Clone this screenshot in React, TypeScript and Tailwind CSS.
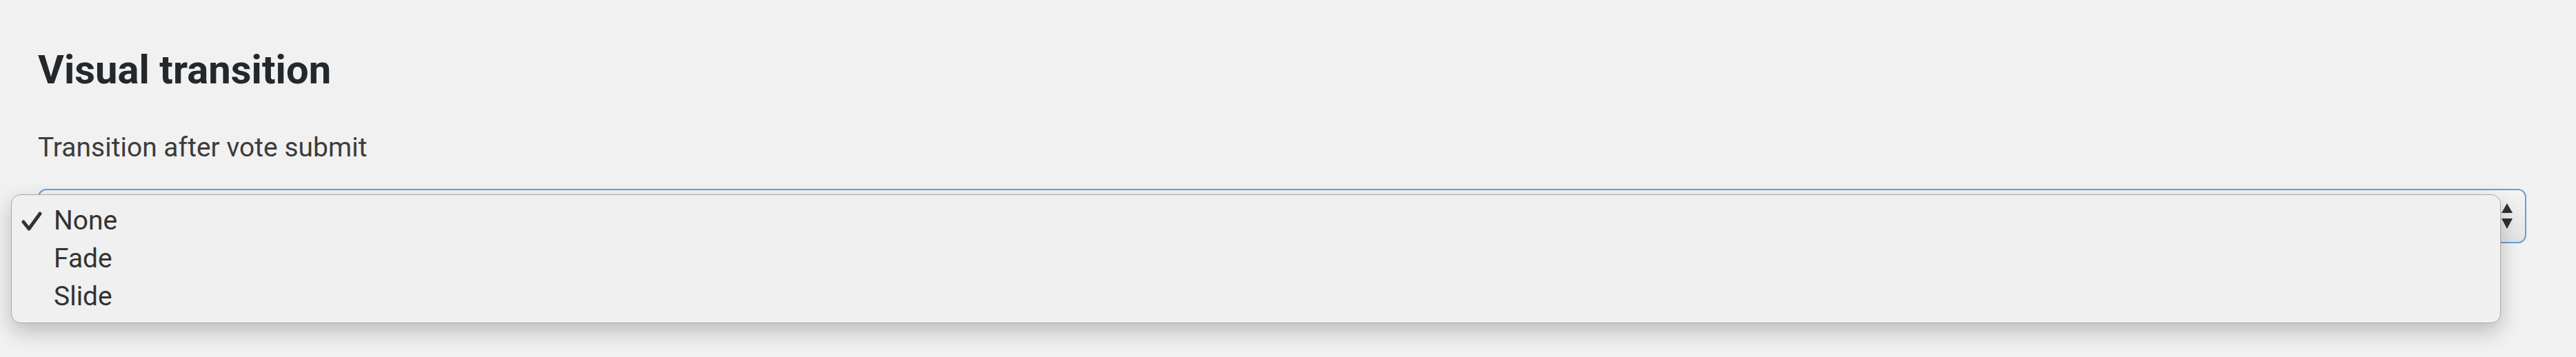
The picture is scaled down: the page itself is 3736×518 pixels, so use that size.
import React from "react";

const options = ["None", "Fade", "Slide"];

function CheckMark() {
  return (
    <svg width="30" height="28" viewBox="0 0 30 28" className="block">
      <path
        d="M3 15 L11 25 L27 3"
        fill="none"
        stroke="#333"
        strokeWidth="5"
        strokeLinecap="round"
        strokeLinejoin="round"
      />
    </svg>
  );
}

function SelectArrows() {
  return (
    <svg width="16" height="38" viewBox="0 0 16 38" className="block">
      <path d="M8 0 L16 14 L0 14 Z" fill="#2f3235" />
      <path d="M0 22 L16 22 L8 37 Z" fill="#2f3235" />
    </svg>
  );
}

export default function App() {
  const selected = "None";

  return (
    <div
      className="min-h-[518px] w-full bg-[#f1f1f1] pl-[55px] pr-[72px] pt-[72px]"
      style={{ fontFamily: "Roboto, 'Liberation Sans', Arial, sans-serif" }}
    >
      <h2 className="text-[58px] font-bold leading-none text-[#23282d]">
        Visual transition
      </h2>

      <div className="mt-[65px] text-[39px] leading-none text-[#3c3c3c]">
        Transition after vote submit
      </div>

      <div className="relative mt-[40px]">
        <div className="flex h-[79px] w-full items-center justify-end rounded-[12px] border-2 border-[#6a9fd6] bg-gradient-to-b from-[#f4f4f4] to-[#e4e4e4] pr-[18px]">
          <SelectArrows />
        </div>

        <div className="absolute left-[-39px] top-[8px] w-[3611px] rounded-[14px] border border-[#a9a9a9] bg-[#f0f0f0] pb-[10px] pt-[10px] shadow-[0_12px_30px_rgba(0,0,0,0.22)]">
          {options.map((opt) => (
            <div key={opt} className="flex h-[55px] items-center">
              <div className="flex w-[61px] justify-start pl-[14px]">
                {opt === selected ? <CheckMark /> : null}
              </div>
              <span className="text-[39px] leading-[55px] text-[#333]">{opt}</span>
            </div>
          ))}
        </div>
      </div>
    </div>
  );
}
